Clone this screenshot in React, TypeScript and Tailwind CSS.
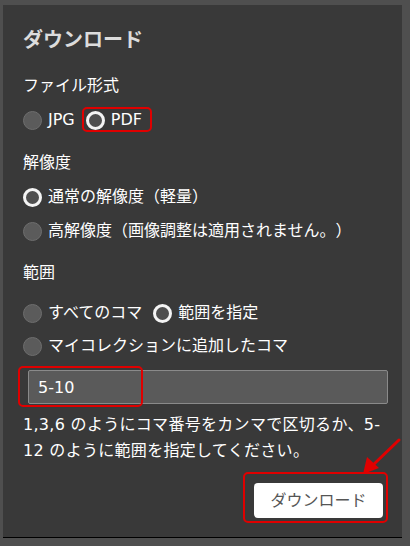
const font = { fontFamily: '"DejaVu Sans", "Noto Sans CJK JP", sans-serif' };

function Radio({ checked, label }: { checked?: boolean; label: string }) {
  return (
    <span className="inline-flex items-center gap-[6px]">
      {checked ? (
        <span className="block w-[19px] h-[19px] rounded-full border-[3px] border-[#f4f4f4] bg-[#4f4f4f]" />
      ) : (
        <span className="block w-[19px] h-[19px] rounded-full border border-[#6e6e6e] bg-[#5b5b5b]" />
      )}
      <span className="text-white">{label}</span>
    </span>
  );
}

export default function App() {
  return (
    <div className="w-[410px] h-[546px] bg-[#4f4f4f] pt-[5px] pl-[3px] [text-spacing-trim:space-all]" style={font}>
      <div className="relative w-[399px] h-[533px] bg-[#393939] border-b border-black pt-[21px] pl-[20px] pr-[14px] text-[16px]">
        {/* タイトル */}
        <h2 className="text-[20px] leading-[28px] font-bold text-[#dcdcdc]">ダウンロード</h2>

        {/* ファイル形式 */}
        <div className="mt-[20px] leading-[24px] text-white">ファイル形式</div>
        <div className="mt-[10px] h-[24px] flex items-center gap-[11px]">
          <Radio label="JPG" />
          <span className="relative inline-flex">
            <Radio checked label="PDF" />
            <span className="absolute left-[-4px] top-[-1px] w-[70px] h-[25px] border-2 border-[#e00000] rounded-[5px]" />
          </span>
        </div>

        {/* 解像度 */}
        <div className="mt-[19px] leading-[24px] text-white">解像度</div>
        <div className="mt-[10px] h-[24px] flex items-center">
          <Radio checked label="通常の解像度（軽量）" />
        </div>
        <div className="mt-[10px] h-[24px] flex items-center">
          <Radio label="高解像度（画像調整は適用されません。）" />
        </div>

        {/* 範囲 */}
        <div className="mt-[18px] leading-[24px] text-white">範囲</div>
        <div className="mt-[16px] h-[24px] flex items-center gap-[11px]">
          <Radio label="すべてのコマ" />
          <Radio checked label="範囲を指定" />
        </div>
        <div className="mt-[9px] h-[24px] flex items-center">
          <Radio label="マイコレクションに追加したコマ" />
        </div>

        <div className="relative mt-[12px] ml-[5px]">
          <input
            readOnly
            value="5-10"
            className="block w-full h-[34px] bg-[#5a5a5a] border border-[#8a8a8a] rounded-[2px] pl-[9px] text-white text-[16px] outline-none"
            style={font}
          />
          <span className="absolute left-[-10px] top-[-4px] w-[125px] h-[41px] border-2 border-[#e00000] rounded-[5px]" />
        </div>

        <p className="mt-[8px] leading-[26px] text-white tracking-[0.3px]">
          1,3,6 のようにコマ番号をカンマで区切るか、5-
          <br />
          12 のように範囲を指定してください。
        </p>

        <div className="mt-[19px] flex justify-end pr-[5px]">
          <span className="relative inline-flex">
            <button className="w-[129px] h-[35px] bg-white rounded-[4px] text-[#555555] text-[16px]" style={font}>
              ダウンロード
            </button>
            <span className="absolute left-[-11px] top-[-11px] right-[-5px] bottom-[-5px] border-2 border-[#e00000] rounded-[5px]" />
          </span>
        </div>

        {/* 矢印 */}
        <svg className="absolute left-0 top-0" width="399" height="533" viewBox="0 0 399 533">
          <line x1="396" y1="435" x2="370" y2="460" stroke="#e00000" strokeWidth="3" strokeLinecap="round" />
          <polygon points="360,469 364,452 376,463" fill="#e00000" />
        </svg>
      </div>
    </div>
  );
}
